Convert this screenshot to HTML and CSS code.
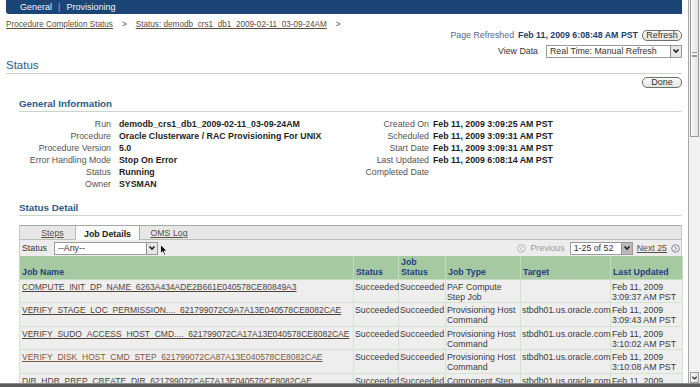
FILE: index.html
```html
<!DOCTYPE html>
<html lang="en">
<head>
<meta charset="utf-8">
<title>Status</title>
<link rel="stylesheet" href="styles.css">
</head>
<body>
<div class="window">
  <div class="viewport">
    <main class="page">
      <div class="topbar"><span>General</span><span class="sep">|</span><span>Provisioning</span></div>
      <nav class="crumbs"><a href="#">Procedure Completion Status</a><span class="gt">&gt;</span><a href="#">Status: demodb_crs1_db1_2009-02-11_03-09-24AM</a><span class="gt">&gt;</span></nav>
      <div class="refresh-row"><span class="muted">Page Refreshed</span><b class="stamp">Feb 11, 2009 6:08:48 AM PST</b><button class="btn">Refresh</button></div>
      <div class="viewdata-row"><span class="lbl">View Data</span><div class="select wide"><span>Real Time: Manual Refresh</span><span class="drop"><svg viewBox="0 0 8 8" width="8" height="8"><polyline points="1.5,2.5 4,5 6.5,2.5" fill="none" stroke="#222" stroke-width="1.6"/></svg></span></div></div>
      <h1 class="title">Status</h1>
      <div class="done-row"><button class="btn">Done</button></div>

      <section class="sub">
        <h2 class="subtitle">General Information</h2>
        <div class="info">
          <span class="k">Run</span><span class="v">demodb_crs1_db1_2009-02-11_03-09-24AM</span><span class="k2">Created On</span><span class="v">Feb 11, 2009 3:09:25 AM PST</span>
          <span class="k">Procedure</span><span class="v">Oracle Clusterware / RAC Provisioning For UNIX</span><span class="k2">Scheduled</span><span class="v">Feb 11, 2009 3:09:31 AM PST</span>
          <span class="k">Procedure Version</span><span class="v">5.0</span><span class="k2">Start Date</span><span class="v">Feb 11, 2009 3:09:31 AM PST</span>
          <span class="k">Error Handling Mode</span><span class="v">Stop On Error</span><span class="k2">Last Updated</span><span class="v">Feb 11, 2009 6:08:14 AM PST</span>
          <span class="k">Status</span><span class="v">Running</span><span class="k2">Completed Date</span><span class="v"></span>
          <span class="k">Owner</span><span class="v">SYSMAN</span><span class="k2"></span><span class="v"></span>
        </div>
      </section>

      <section class="sub detail">
        <h2 class="subtitle">Status Detail</h2>
        <div class="tabs">
          <a class="tab first" href="#">Steps</a>
          <span class="tab active">Job Details</span>
          <a class="tab last" href="#">OMS Log</a>
        </div>
        <div class="filter">
          <span class="lbl">Status</span>
          <div class="select any"><span>--Any--</span><span class="drop"><svg viewBox="0 0 8 8" width="8" height="8"><polyline points="1.5,2.5 4,5 6.5,2.5" fill="none" stroke="#222" stroke-width="1.6"/></svg></span></div>
          <svg class="cursor" viewBox="0 0 8 12" width="8" height="12"><path d="M0.5,0.5 L0.5,9.5 L2.6,7.6 L4.2,11 L5.6,10.4 L4.1,7.1 L7,7.1 Z" fill="#111" stroke="#fff" stroke-width="0.8"/></svg>
          <div class="pager">
            <svg class="circ" viewBox="0 0 9 9" width="9" height="9"><circle cx="4.5" cy="4.5" r="3.8" fill="none" stroke="#b0b0b0" stroke-width="0.9"/><polyline points="5.4,2.6 3.4,4.5 5.4,6.4" fill="none" stroke="#b0b0b0" stroke-width="1"/></svg>
            <span class="prev">Previous</span>
            <div class="select range"><span>1-25 of 52</span><span class="drop dark"><svg viewBox="0 0 8 8" width="8" height="8"><polyline points="1.5,2.5 4,5 6.5,2.5" fill="none" stroke="#222" stroke-width="1.6"/></svg></span></div>
            <a class="next" href="#">Next 25</a>
            <svg class="circ" viewBox="0 0 9 9" width="9" height="9"><circle cx="4.5" cy="4.5" r="3.8" fill="none" stroke="#6c7f98" stroke-width="0.9"/><polyline points="3.6,2.6 5.6,4.5 3.6,6.4" fill="none" stroke="#6c7f98" stroke-width="1"/></svg>
          </div>
        </div>
        <table class="jobs">
          <colgroup>
            <col class="c-name"><col class="c-status"><col class="c-jstatus"><col class="c-type"><col class="c-target"><col class="c-upd">
          </colgroup>
          <thead>
            <tr><th>Job Name</th><th>Status</th><th>Job<br>Status</th><th>Job Type</th><th>Target</th><th>Last Updated</th></tr>
          </thead>
          <tbody>
            <tr><td><a href="#">COMPUTE_INIT_DP_NAME_6263A434ADE2B661E040578CE80849A3</a></td><td>Succeeded</td><td>Succeeded</td><td>PAF Compute<br>Step Job</td><td></td><td>Feb 11, 2009<br>3:09:37 AM PST</td></tr>
            <tr><td><a href="#">VERIFY_STAGE_LOC_PERMISSION...._621799072C9A7A13E040578CE8082CAE</a></td><td>Succeeded</td><td>Succeeded</td><td>Provisioning Host<br>Command</td><td>stbdh01.us.oracle.com</td><td>Feb 11, 2009<br>3:09:43 AM PST</td></tr>
            <tr><td><a href="#">VERIFY_SUDO_ACCESS_HOST_CMD...._621799072CA17A13E040578CE8082CAE</a></td><td>Succeeded</td><td>Succeeded</td><td>Provisioning Host<br>Command</td><td>stbdh01.us.oracle.com</td><td>Feb 11, 2009<br>3:10:02 AM PST</td></tr>
            <tr><td><a class="visited" href="#">VERIFY_DISK_HOST_CMD_STEP_621799072CA87A13E040578CE8082CAE</a></td><td>Succeeded</td><td>Succeeded</td><td>Provisioning Host<br>Command</td><td>stbdh01.us.oracle.com</td><td>Feb 11, 2009<br>3:10:08 AM PST</td></tr>
            <tr><td><a href="#">DIR_HDR_PREP_CREATE_DIR_621799072CAF7A13E040578CE8082CAE</a></td><td>Succeeded</td><td>Succeeded</td><td>Component Step</td><td>stbdh01.us.oracle.com</td><td>Feb 11, 2009<br>3:10:14 AM PST</td></tr>
          </tbody>
        </table>
      </section>
    </main>
    <div class="scrollbar">
      <div class="thumb"><span class="grip"></span></div>
      <div class="track"></div>
      <div class="sb-btn"><svg viewBox="0 0 8 8" width="8" height="8"><polyline points="1.5,2.5 4,5 6.5,2.5" fill="none" stroke="#333" stroke-width="1.5"/></svg></div>
    </div>
  </div>
  <div class="frame-bottom"></div>
</div>
</body>
</html>
```

FILE: styles.css
```css
* { box-sizing: border-box; }
html, body { margin: 0; padding: 0; }
body {
  width: 700px;
  height: 387px;
  overflow: hidden;
  background: #fff;
  font-family: "Liberation Sans", Arial, sans-serif;
  font-size: 8.8px;
  color: #333;
}
a { color: #5e4b3c; }

.window { display: flex; flex-direction: column; height: 387px; }
.viewport { display: flex; height: 383px; overflow: hidden; }
.page { width: 688px; flex: none; padding: 0 6px; overflow: hidden; }

/* top bar */
.topbar {
  height: 14px;
  background: #1a4574;
  color: #f2f5f9;
  font-size: 9px;
  line-height: 14px;
  padding-left: 14px;
  border-bottom-left-radius: 3px;
  display: flex;
  gap: 6px;
}
.topbar .sep { color: #9fb3cc; }

.crumbs { margin-top: 6px; height: 9px; line-height: 9px; display: flex; color: #5e4b3c; font-size: 8.2px; }
.crumbs .gt { margin: 0 9px; }

.refresh-row {
  height: 12px;
  display: flex;
  justify-content: flex-end;
  align-items: center;
  gap: 4px;
}
.muted { color: #4f6a8c; }
.stamp { color: #1f3d6b; font-weight: bold; }
.btn {
  height: 11px;
  width: 40px;
  padding: 0;
  border: 1px solid #6f6f6f;
  border-radius: 5px;
  background: linear-gradient(#fbfbf8, #e4e4de);
  font-family: inherit;
  font-size: 9px;
  line-height: 9px;
  color: #333;
}

.viewdata-row {
  margin-top: 3px;
  height: 14px;
  display: flex;
  justify-content: flex-end;
  align-items: center;
  gap: 8px;
}
.lbl { color: #333; }
.select {
  display: flex;
  align-items: center;
  justify-content: space-between;
  background: #fff;
  border: 1px solid #9b9b9b;
  padding-left: 3px;
  color: #333;
}
.select.wide { width: 136px; height: 13px; }
.drop {
  width: 11px;
  height: 100%;
  display: flex;
  align-items: center;
  justify-content: center;
  background: #e6e6e6;
  border-left: 1px solid #8e8e8e;
}
.drop.dark { background: #b9b9b9; }

.title {
  margin: 1px 0 0;
  height: 15px;
  font-size: 11.5px;
  font-weight: normal;
  line-height: 12px;
  color: #2e5b8a;
  border-bottom: 1px solid #c9d6c8;
}
.done-row { margin-top: 3px; display: flex; justify-content: flex-end; }

.sub { padding-left: 13px; }
.subtitle {
  margin: 10px 0 0;
  height: 14px;
  font-size: 9.8px;
  line-height: 11px;
  font-weight: bold;
  color: #2d5a8a;
  border-bottom: 1px solid #c9d6c8;
}

.info {
  margin-top: 6px;
  display: grid;
  grid-template-columns: 100px 226px 88px 1fr;
  grid-auto-rows: 12px;
  line-height: 12px;
}
.info .k { text-align: right; padding-right: 8px; color: #555; }
.info .k2 { text-align: right; padding-right: 4px; color: #555; }
.info .v { font-weight: bold; color: #1e1e1e; white-space: nowrap; }

.detail .subtitle { margin-top: 12px; }

.tabs {
  margin-top: 9px;
  height: 15px;
  display: flex;
  background: #e7e7e7;
  border-top: 1px solid #a3ada3;
  border-bottom: 1px solid #b7c0b6;
  border-left: 1px solid #c8c8c8;
  border-right: 1px solid #c8c8c8;
}
.tab {
  display: flex;
  align-items: center;
  justify-content: center;
  height: 14px;
  color: #5e4b3c;
}
.tab.first { width: 55px; padding-left: 10px; }
.tab.active {
  width: 65px;
  height: 15px;
  margin-bottom: -1px;
  background: #fafafa;
  border-left: 1px solid #b7c0b6;
  border-right: 1px solid #a3ada3;
  font-weight: bold;
  color: #222;
}
.tab.last { width: 58px; }

.filter {
  position: relative;
  height: 16px;
  display: flex;
  align-items: center;
  background: #ededed;
  border-left: 1px solid #c8c8c8;
  border-right: 1px solid #c8c8c8;
  padding: 0 1px 0 2px;
}
.filter .lbl { width: 32px; }
.select.any { width: 104px; height: 13px; }
.cursor { position: absolute; left: 140px; top: 4px; }

.pager { margin-left: auto; display: flex; align-items: center; gap: 4px; }
.prev { color: #9a9a9a; margin-right: 1px; }
.select.range { width: 63px; height: 13px; }
.next { color: #5e4b3c; }

.jobs {
  width: 663px;
  table-layout: fixed;
  border-collapse: collapse;
  line-height: 10.25px;
}
.c-name { width: 334px; }
.c-status { width: 45px; }
.c-jstatus { width: 47px; }
.c-type { width: 75px; }
.c-target { width: 90px; }
.c-upd { width: 72px; }

.jobs th {
  height: 23px;
  background: #a7c9a1;
  color: #233f82;
  font-weight: bold;
  text-align: left;
  vertical-align: bottom;
  padding: 0 1px 2px 2px;
  border: 1px solid #c4dbc0;
  border-top: none;
  line-height: 10px;
}
.jobs td {
  background: #eeeeee;
  color: #3a3a3a;
  vertical-align: top;
  padding: 2px 0 0 1px;
  border: 1px solid #d3e5cf;
  white-space: nowrap;
}
.jobs td:first-child { padding-left: 2px; }
.jobs td a { color: #514338; font-size: 8.5px; }
.jobs td a.visited { color: #80583c; }

/* scrollbar */
.scrollbar {
  width: 12px;
  flex: none;
  display: flex;
  flex-direction: column;
  background: #f1f1f1;
  border-left: 1px solid #a9a9a9;
}
.thumb {
  height: 137px;
  margin: 0 1px;
  background: linear-gradient(90deg, #f8f8f8, #e2e2e2);
  border: 1px solid #9c9c9c;
  border-top: none;
  display: flex;
  justify-content: center;
  padding-top: 52px;
}
.grip {
  width: 5px;
  height: 5px;
  border-top: 1px solid #999;
  border-bottom: 1px solid #999;
  background: linear-gradient(#fff 0 1px, #999 1px 2px, transparent 2px);
  background-position: 0 1px;
  background-repeat: no-repeat;
}
.track { flex: 1; }
.sb-btn {
  height: 11px;
  margin: 0 1px;
  display: flex;
  align-items: center;
  justify-content: center;
  background: linear-gradient(90deg, #f9f9f9, #dedede);
  border: 1px solid #9c9c9c;
}

.frame-bottom { height: 4px; background: #5d5d5d; border-top: 1px solid #8e8e8e; }
```
